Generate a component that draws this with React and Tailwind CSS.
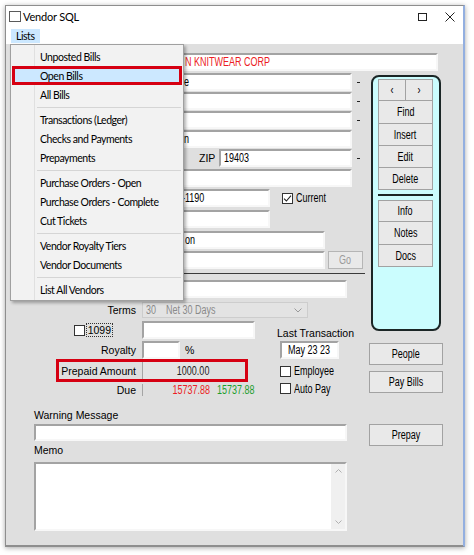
import React from "react";

const LABEL = "font-['Liberation_Sans',Arial,sans-serif] text-[10.5px] leading-[12px] text-black whitespace-nowrap";
const NARROW = "font-['Liberation_Sans',Arial,sans-serif] text-[12px] leading-[14px] whitespace-nowrap";
const MENU = "font-['Lato','Noto_Sans',sans-serif] text-[10.5px] leading-[12px] tracking-[-0.45px] text-black whitespace-nowrap";

function N({ children, origin = "left", className = "" }) {
  const o = origin === "center" ? "origin-center" : origin === "right" ? "origin-right" : "origin-left";
  return <span className={"inline-block scale-x-[0.75] " + o + " " + className}>{children}</span>;
}

function Field({ className = "", children }) {
  return (
    <div
      className={
        "h-[18px] bg-white border-2 border-t-[#a3a3a3] border-l-[#a3a3a3] border-r-[#f7f7f7] border-b-[#f7f7f7] flex items-center overflow-hidden " +
        NARROW +
        " " +
        className
      }
    >
      {children}
    </div>
  );
}

function Btn({ className = "", children }) {
  return (
    <div
      className={
        "flex items-center justify-center bg-[#e9e9e9] border border-[#a2a2a2] text-black " +
        NARROW +
        " " +
        className
      }
    >
      <N origin="center">{children}</N>
    </div>
  );
}

function Check({ checked = false }) {
  return (
    <div className="w-[11px] h-[11px] bg-white border border-[#333] flex items-center justify-center shrink-0">
      {checked && (
        <svg width="9" height="9" viewBox="0 0 9 9">
          <path d="M1 4.6 L3.4 7 L8 1.6" stroke="#222" strokeWidth="1.1" fill="none" />
        </svg>
      )}
    </div>
  );
}

function Dash() {
  return <div className="ml-[5px] w-[3px] h-[1px] bg-[#222]" />;
}

function MenuItem({ children, active = false }) {
  if (active) {
    return (
      <div className={"relative z-10 h-[19px] mx-[1px] flex items-center pl-[25px] bg-[#cce8ff] border-[3px] border-[#d60012] " + MENU}>
        {children}
      </div>
    );
  }
  return (
    <div className={"relative z-10 h-[19px] mx-[1px] flex items-center pl-[28px] " + MENU}>{children}</div>
  );
}

function MenuSep() {
  return (
    <div className="h-[6px] flex items-center pl-[26px] pr-[2px]">
      <div className="w-full h-[1px] bg-[#d5d5d5]" />
    </div>
  );
}

export default function App() {
  return (
    <div className="w-[474px] h-[555px] bg-white pt-[5px] pl-[5px] overflow-hidden">
      <div className="w-[460px] h-[542px] flex flex-col bg-white border border-[#8e8e8e] border-r-2 border-r-[#93afe0] shadow-[0_1px_5px_rgba(0,0,0,0.35)]">
        {/* Title bar */}
        <div className="h-[21px] flex items-center shrink-0">
          <div className="ml-[3px] w-[12px] h-[11px] border border-[#5a5a5a] bg-white" />
          <span className={MENU + " ml-[2px] !text-[11px] !tracking-[-0.2px]"}>Vendor SQL</span>
          <div className="ml-auto mr-[18px] w-[9px] h-[8px] border border-[#222]" />
          <svg className="mr-[8px]" width="10" height="10" viewBox="0 0 10 10">
            <path d="M0.5 0.5 L9.5 9.5 M9.5 0.5 L0.5 9.5" stroke="#222" strokeWidth="1" />
          </svg>
        </div>
        {/* Menu bar */}
        <div className="h-[17px] flex items-center shrink-0 bg-white">
          <div className={"ml-[5px] h-[14px] px-[5px] flex items-center bg-[#cce8ff] " + MENU}>Lists</div>
        </div>

        {/* Body */}
        <div className="relative flex-1 bg-[#dfdfdf] pt-[9px] border-b border-[#8e8e8e]">
          {/* Name */}
          <Field className="ml-[136px] w-[296px]">
            <span className="pl-[41px] flex"><N className="text-[#ec1c24]">N KNITWEAR CORP</N></span>
          </Field>

          <div className="flex mt-[2px]">
            {/* Left column */}
            <div className="w-[363px] shrink-0 flex flex-col">
              <div className="flex items-center">
                <Field className="ml-[136px] w-[210px]"><span className="pl-[40px] flex"><N>e</N></span></Field>
                <Dash />
              </div>
              <div className="flex items-center mt-[1px]">
                <Field className="ml-[136px] w-[210px]" />
                <Dash />
              </div>
              <div className="flex items-center mt-[1px]">
                <Field className="ml-[136px] w-[210px]" />
                <Dash />
              </div>
              <div className="flex items-center mt-[1px]">
                <Field className="ml-[136px] w-[210px]"><span className="pl-[40px] flex"><N>n</N></span></Field>
              </div>
              <div className="flex items-center mt-[1px]">
                <span className={LABEL + " ml-[193px] w-[20px]"}>ZIP</span>
                <Field className="w-[133px]"><span className="pl-[3px] flex"><N>19403</N></span></Field>
                <Dash />
              </div>
              <div className="flex items-center mt-[2px]">
                <Field className="ml-[136px] w-[210px]" />
              </div>
              <div className="flex items-center mt-[2px]">
                <Field className="ml-[136px] w-[128px]"><span className="pl-[38px] flex"><N>-1190</N></span></Field>
                <div className="ml-[12px] flex items-center">
                  <Check checked />
                  <span className={NARROW + " ml-[3px] text-black flex"}><N>Current</N></span>
                </div>
              </div>
              <div className="flex items-center mt-[3px]">
                <Field className="ml-[136px] w-[128px]" />
              </div>
              <div className="flex items-center mt-[3px]">
                <Field className="ml-[136px] w-[183px]"><span className="pl-[41px] flex"><N>on</N></span></Field>
              </div>
              <div className="flex items-center mt-[2px]">
                <Field className="ml-[136px] w-[183px]" />
                <Btn className="ml-[3px] w-[35px] h-[18px] !text-[#9a9a9a] bg-[#e4e4e4] border-[#b5b5b5]">Go</Btn>
              </div>
              <div className="mt-[4px] ml-[8px] w-[351px] h-[1px] bg-[#3a3a3a]" />
              <div className="flex items-center mt-[6px]">
                <Field className="ml-[136px] w-[205px]" />
              </div>

              {/* Terms */}
              <div className="flex items-center mt-[4px] h-[16px]">
                <span className={LABEL + " w-[130px] text-right"}>Terms</span>
                <div className={"ml-[6px] w-[166px] h-[16px] bg-[#e3e3e3] border border-[#cdcdcd] flex items-center text-[#8a8a8a] " + NARROW}>
                  <span className="pl-[3px] w-[23px] flex"><N>30</N></span>
                  <span className="flex"><N>Net 30 Days</N></span>
                  <svg className="ml-auto mr-[5px]" width="8" height="5" viewBox="0 0 8 5">
                    <path d="M0.5 0.5 L4 4 L7.5 0.5" stroke="#9a9a9a" strokeWidth="1" fill="none" />
                  </svg>
                </div>
              </div>

              {/* 1099 row */}
              <div className="flex mt-[3px] h-[18px]">
                <div className="w-[271px] flex items-center shrink-0">
                  <div className="w-[136px] flex items-center justify-end pr-[29px]">
                    <Check />
                    <span className={LABEL + " ml-[1px] px-[1px] border border-dotted border-[#333]"}>1099</span>
                  </div>
                  <Field className="w-[113px]" />
                </div>
                <span className={LABEL + " self-end"}>Last Transaction</span>
              </div>

              {/* Royalty */}
              <div className="flex mt-[2px] h-[18px] items-center">
                <div className="w-[271px] flex items-center shrink-0">
                  <span className={LABEL + " w-[130px] text-right"}>Royalty</span>
                  <Field className="ml-[6px] w-[38px]" />
                  <span className={LABEL + " ml-[5px]"}>%</span>
                </div>
                <Field className="ml-[3px] w-[59px] justify-center"><N origin="center">May 23 23</N></Field>
              </div>

              {/* Prepaid */}
              <div className="relative flex mt-[3px] h-[18px] items-center">
                <div className="w-[271px] flex items-center shrink-0">
                  <span className={LABEL + " w-[130px] text-right"}>Prepaid Amount</span>
                  <div className={"ml-[6px] w-[68px] h-[18px] bg-[#e4e4e4] border-l border-[#a5a5a5] flex items-center justify-end pr-[1px] text-[#222] " + NARROW}>
                    <N origin="right">1000.00</N>
                  </div>
                </div>
                <div className="ml-[3px] flex items-center">
                  <Check />
                  <span className={NARROW + " ml-[3px] text-black flex"}><N>Employee</N></span>
                </div>
                <div className="absolute left-[50px] top-[-3px] w-[192px] h-[23px] border-[3px] border-[#d60012]" />
              </div>

              {/* Due */}
              <div className="flex mt-[3px] h-[14px] items-center">
                <div className="w-[271px] flex items-center shrink-0">
                  <span className={LABEL + " w-[130px] text-right"}>Due</span>
                  <div className={"ml-[6px] w-[68px] h-[12px] border-l border-[#a5a5a5] flex items-center justify-end text-[#ec1c24] " + NARROW}>
                    <N origin="right">15737.88</N>
                  </div>
                  <span className={NARROW + " ml-[7px] text-[#1e9e2e] flex"}><N>15737.88</N></span>
                </div>
                <div className="ml-[3px] flex items-center mt-[-3px]">
                  <Check />
                  <span className={NARROW + " ml-[3px] text-black flex"}><N>Auto Pay</N></span>
                </div>
              </div>

              {/* Warning */}
              <span className={LABEL + " mt-[12px] ml-[28px]"}>Warning Message</span>
              <Field className="mt-[3px] ml-[28px] w-[313px] !h-[17px]" />
              <span className={LABEL + " mt-[3px] ml-[28px]"}>Memo</span>
              <div className="mt-[6px] ml-[28px] w-[313px] h-[69px] bg-white border-2 border-t-[#a3a3a3] border-l-[#a3a3a3] border-r-[#f7f7f7] border-b-[#f7f7f7] flex justify-end">
                <div className="w-[14px] h-full bg-[#f0f0f0] flex flex-col items-center justify-between py-[5px]">
                  <svg width="7" height="4" viewBox="0 0 7 4">
                    <path d="M0.5 3.5 L3.5 0.5 L6.5 3.5" stroke="#b0b0b0" strokeWidth="1" fill="none" />
                  </svg>
                  <svg width="7" height="4" viewBox="0 0 7 4">
                    <path d="M0.5 0.5 L3.5 3.5 L6.5 0.5" stroke="#b0b0b0" strokeWidth="1" fill="none" />
                  </svg>
                </div>
              </div>
            </div>

            {/* Right column */}
            <div className="w-[74px] shrink-0 flex flex-col">
              <div className="mt-[2px] ml-[2px] w-[70px] h-[256px] rounded-[8px] border-2 border-[#1b2626] bg-[#cbfdfe] pt-[2px] pl-[5px]">
                <div className="w-[55px] flex">
                  <Btn className="w-[28px] h-[22px]">&lsaquo;</Btn>
                  <Btn className="w-[27px] h-[22px] border-l-0">&rsaquo;</Btn>
                </div>
                <Btn className="w-[55px] h-[23px] border-t-0">Find</Btn>
                <Btn className="w-[55px] h-[22px] border-t-0">Insert</Btn>
                <Btn className="w-[55px] h-[22px] border-t-0">Edit</Btn>
                <Btn className="w-[55px] h-[22px] border-t-0">Delete</Btn>
                <div className="mt-[4px] w-[55px] h-[2px] bg-[#1b2626]" />
                <Btn className="mt-[4px] w-[55px] h-[22px]">Info</Btn>
                <Btn className="w-[55px] h-[23px] border-t-0">Notes</Btn>
                <Btn className="w-[55px] h-[22px] border-t-0">Docs</Btn>
              </div>
              <Btn className="mt-[12px] w-[74px] h-[22px]">People</Btn>
              <Btn className="mt-[6px] w-[74px] h-[22px]">Pay Bills</Btn>
              <Btn className="mt-[31px] w-[74px] h-[22px]">Prepay</Btn>
            </div>
          </div>

          {/* Dropdown menu overlay */}
          <div className="absolute left-[4px] top-0 w-[174px] bg-[#f2f2f2] border border-[#a0a0a0] pt-[2px] pb-[1px] shadow-[2px_2px_3px_rgba(0,0,0,0.3)] z-20">
            <div className="absolute left-[23px] top-0 bottom-0 w-[1px] bg-[#e0e0e0]" />
            <MenuItem>Unposted Bills</MenuItem>
            <MenuItem active>Open Bills</MenuItem>
            <MenuItem>All Bills</MenuItem>
            <MenuSep />
            <MenuItem>Transactions (Ledger)</MenuItem>
            <MenuItem>Checks and Payments</MenuItem>
            <MenuItem>Prepayments</MenuItem>
            <MenuSep />
            <MenuItem>Purchase Orders - Open</MenuItem>
            <MenuItem>Purchase Orders - Complete</MenuItem>
            <MenuItem>Cut Tickets</MenuItem>
            <MenuSep />
            <MenuItem>Vendor Royalty Tiers</MenuItem>
            <MenuItem>Vendor Documents</MenuItem>
            <MenuSep />
            <MenuItem>List All Vendors</MenuItem>
          </div>
        </div>
      </div>
    </div>
  );
}
